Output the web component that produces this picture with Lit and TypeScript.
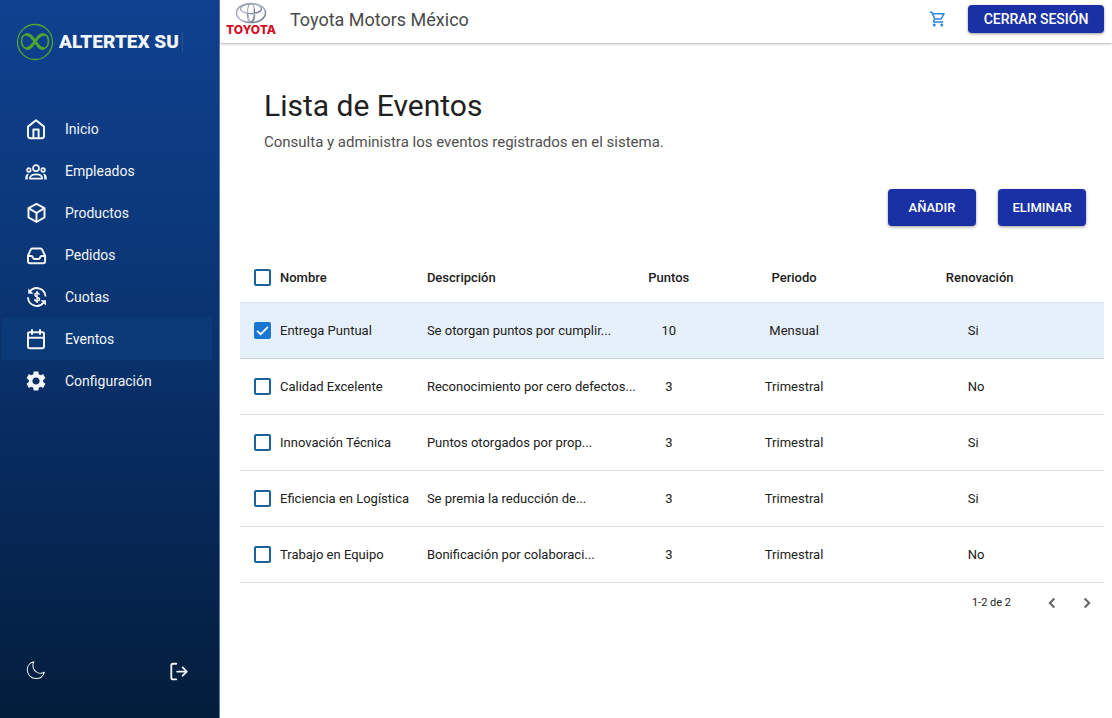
import { LitElement, html, css, svg } from "lit";
import { customElement, property, state } from "lit/decorators.js";
import { classMap } from "lit/directives/class-map.js";

const icons = {
  home: svg`<g fill="none" stroke="currentColor" stroke-width="2" stroke-linejoin="round" stroke-linecap="round"><path d="M4 9.6 12 3.2l8 6.4V19a2.2 2.2 0 0 1-2.2 2.2H6.2A2.2 2.2 0 0 1 4 19z"/><path d="M9.4 21v-8.600h5.200V21"/></g>`,
  people: svg`<g fill="none" stroke="currentColor" stroke-width="1.700" stroke-linejoin="round"><circle cx="12" cy="9.200" r="3"/><circle cx="4.900" cy="11" r="1.800"/><circle cx="19.100" cy="11" r="1.800"/><path d="M5.800 19.600c0-2.800 2.400-4.200 6.200-4.200s6.200 1.400 6.200 4.200z"/></g><path fill="currentColor" d="M4.800 14.600c-2.600.2-3.600 2-3.600 5.800h2.600c-.1-2.500.2-4.200 1-5.800zM19.200 14.600c2.600.2 3.600 2 3.600 5.800h-2.600c.1-2.500-.2-4.200-1-5.800z"/>`,
  box: svg`<g fill="none" stroke="currentColor" stroke-width="2" stroke-linejoin="round"><path d="m12.500 2.800 8 4.400v9.200l-8 4.600-8-4.600V7.200z"/><path d="m4.500 7.200 8 4.600 8-4.600M12.500 11.800V21"/></g>`,
  inbox: svg`<g fill="none" stroke="currentColor" stroke-width="2" stroke-linejoin="round" stroke-linecap="round"><path d="M4 12.700 6.600 6.800A2 2 0 0 1 8.400 5.500h8a2 2 0 0 1 1.800 1.300l2.900 5.900v5.600a2 2 0 0 1-2 2H6a2 2 0 0 1-2-2z"/><path d="M4 13.100h3.800c.8 0 1.200 2.800 2.500 2.800h4.400c1.300 0 1.700-2.800 2.500-2.800H21"/></g>`,
  money: svg`<g fill="none" stroke="currentColor" stroke-width="1.900"><path d="M6 6.200A8.800 8.800 0 0 1 21.500 11.500M19.600 17.600A8.800 8.800 0 0 1 4 12.200"/><path d="M15.300 9.700c-.2-1-1-1.600-2.200-1.600s-2.200.7-2.200 1.800c0 2.600 4.600 1.500 4.600 4.200 0 1.200-1.100 1.900-2.400 1.900s-2.300-.7-2.400-1.900M13.100 6v12" stroke-width="1.500"/></g><path fill="currentColor" d="M4.200 3.400v5.400h5.400zM21.900 20.600v-5.400h-5.400z"/>`,
  calendar: svg`<g fill="none" stroke="currentColor" stroke-width="2" stroke-linejoin="round" stroke-linecap="round"><rect x="4" y="5.200" width="16" height="16" rx="1.600"/><path d="M4 10.800h16M8 3v4M16 3v4"/></g>`,
  gear: svg`<path fill="currentColor" d="M19.140 12.940c.04-.3.060-.61.060-.94 0-.32-.02-.64-.07-.94l2.030-1.580c.18-.14.230-.41.120-.61l-1.920-3.320c-.12-.22-.37-.29-.59-.22l-2.390.96c-.5-.38-1.030-.7-1.620-.94l-.36-2.540c-.04-.24-.24-.41-.48-.41h-3.840c-.24 0-.43.170-.47.410l-.36 2.540c-.59.240-1.130.570-1.620.940l-2.390-.96c-.22-.08-.47 0-.59.220L2.740 8.870c-.12.210-.08.470.120.610l2.030 1.580c-.05.3-.09.630-.09.940s.02.640.070.940l-2.030 1.580c-.18.140-.23.410-.12.610l1.920 3.320c.12.220.370.290.590.220l2.390-.96c.5.380 1.030.7 1.620.940l.36 2.540c.05.240.240.410.480.410h3.840c.24 0 .44-.17.470-.41l.36-2.540c.59-.24 1.130-.56 1.620-.94l2.390.960c.22.080.470 0 .59-.22l1.920-3.320c.12-.22.070-.47-.12-.61l-2.010-1.580zM12 15.600c-1.980 0-3.600-1.620-3.600-3.600s1.620-3.600 3.600-3.600 3.600 1.620 3.600 3.600-1.620 3.600-3.600 3.600z"/>`,
  moon: svg`<path fill="none" stroke="currentColor" stroke-width="1.100" stroke-linejoin="round" d="M9.700 .8C5.500 1.600 2.500 5.200 2.500 9.600c0 5.500 4.300 9.600 9.600 9.600 4.200 0 7.700-2.700 9-6.900-2.200 1.300-5.300 1.500-8 .1-4-2.200-5.800-7.200-3.400-11.600z"/>`,
  logout: svg`<g fill="none" stroke="currentColor" stroke-width="2" stroke-linecap="round" stroke-linejoin="round"><path d="M9 3H5.400a1.800 1.800 0 0 0-1.800 1.800v13.400A1.800 1.800 0 0 0 5.400 20H9"/><path d="M10 11.500h10.500M16 7l4.500 4.500L16 16"/></g>`,
  cart: svg`<path fill="currentColor" d="M15.550 13c.75 0 1.410-.41 1.750-1.030l3.580-6.490A.996.996 0 0 0 20.010 4H5.210l-.94-2H1v2h2l3.600 7.590-1.350 2.440C4.520 15.370 5.480 17 7 17h12v-2H7l1.100-2h7.450zM6.160 6h12.150l-2.760 5H8.530L6.160 6zM7 18c-1.100 0-1.990.9-1.990 2S5.900 22 7 22s2-.9 2-2-.9-2-2-2zm10 0c-1.100 0-1.990.9-1.990 2s.89 2 1.990 2 2-.9 2-2-.9-2-2-2z"/>`,
  prev: svg`<path fill="currentColor" stroke="currentColor" stroke-width=".6" d="M15.410 7.410 14 6l-6 6 6 6 1.410-1.410L10.830 12z"/>`,
  next: svg`<path fill="currentColor" stroke="currentColor" stroke-width=".6" d="M10 6 8.590 7.410 13.170 12l-4.580 4.590L10 18l6-6z"/>`,
};

type IconName = keyof typeof icons;

@customElement("ui-icon")
export class UiIcon extends LitElement {
  @property() name: IconName = "home";

  static styles = css`
    :host { display: block; width: 24px; height: 24px; flex: none; }
    svg { display: block; width: 100%; height: 100%; }
  `;

  render() {
    return html`<svg viewBox="0 0 24 24" aria-hidden="true">${icons[this.name]}</svg>`;
  }
}

@customElement("app-sidebar")
export class AppSidebar extends LitElement {
  private items: { icon: IconName; label: string }[] = [
    { icon: "home", label: "Inicio" },
    { icon: "people", label: "Empleados" },
    { icon: "box", label: "Productos" },
    { icon: "inbox", label: "Pedidos" },
    { icon: "money", label: "Cuotas" },
    { icon: "calendar", label: "Eventos" },
    { icon: "gear", label: "Configuración" },
  ];

  static styles = css`
    :host {
      display: flex;
      flex-direction: column;
      width: 220px;
      flex: none;
      box-sizing: border-box;
      border-right: 1px solid #5d7ba8;
      background: linear-gradient(180deg, #0f4190 0%, #0b3777 36%, #07295a 68%, #031e3c 100%);
      color: #f3f5f8;
    }
    .brand { display: flex; align-items: center; gap: 5px; padding: 23px 0 0 16px; }
    .emblem { width: 38px; height: 38px; flex: none; }
    .word {
      font: 900 19px/20px Roboto, "Liberation Sans", sans-serif;
      white-space: nowrap;
      padding-right: 3px;
      border-right: 1px solid #2c5698;
    }
    .nav { display: flex; flex-direction: column; padding: 47px 7px 0 2px; }
    .link {
      display: flex;
      align-items: center;
      gap: 17px;
      height: 42px;
      padding-left: 22px;
      color: inherit;
      text-decoration: none;
      font-size: 14px;
      line-height: 20px;
    }
    .active { background: #0b3a78; }
    .foot { display: flex; justify-content: space-between; margin-top: auto; padding: 0 29px 35px 25px; }
    .tool { padding: 0; border: 0; background: none; color: inherit; cursor: pointer; }
    .tool ui-icon { width: 22px; height: 22px; }
  `;

  render() {
    return html`
      <div class="brand">
        <svg class="emblem" viewBox="0 0 38 38" fill="none" stroke="#4fa62c" aria-hidden="true">
          <circle cx="19" cy="19" r="17.500" stroke-width="1.300" />
          <path d="M10.500 11.500C7 11.500 5.500 14.500 5.500 18.500 6 23.500 8 25.500 11 25.500M27.500 11.500C31 11.500 32.500 14.500 32.500 18.500 32 23.500 30 25.500 27 25.500" stroke-width="1.700" />
          <path d="M9.500 11.800C14 10.500 16.500 15 19 18.500 21.500 22 24 26.500 28 25.200M28.500 11.800C24 10.500 21.500 15 19 18.500 16.500 22 14 26.500 10 25.200" stroke-width="2.900" />
        </svg>
        <span class="word">ALTERTEX SU</span>
      </div>
      <nav class="nav">
        ${this.items.map(
          (i) => html`<a href="#" class=${classMap({ link: true, active: i.label === "Eventos" })}>
            <ui-icon name=${i.icon}></ui-icon>${i.label}
          </a>`
        )}
      </nav>
      <div class="foot">
        <button class="tool" aria-label="Modo oscuro"><ui-icon name="moon"></ui-icon></button>
        <button class="tool" aria-label="Salir"><ui-icon name="logout"></ui-icon></button>
      </div>
    `;
  }
}

interface Evento {
  nombre: string;
  descripcion: string;
  puntos: number;
  periodo: string;
  renovacion: string;
}

@customElement("app-root")
export class AppRoot extends LitElement {
  @state() private selected = new Set<number>([0]);

  private eventos: Evento[] = [
    { nombre: "Entrega Puntual", descripcion: "Se otorgan puntos por cumplir...", puntos: 10, periodo: "Mensual", renovacion: "Si" },
    { nombre: "Calidad Excelente", descripcion: "Reconocimiento por cero defectos...", puntos: 3, periodo: "Trimestral", renovacion: "No" },
    { nombre: "Innovación Técnica", descripcion: "Puntos otorgados por prop...", puntos: 3, periodo: "Trimestral", renovacion: "Si" },
    { nombre: "Eficiencia en Logística", descripcion: "Se premia la reducción de...", puntos: 3, periodo: "Trimestral", renovacion: "Si" },
    { nombre: "Trabajo en Equipo", descripcion: "Bonificación por colaboraci...", puntos: 3, periodo: "Trimestral", renovacion: "No" },
  ];

  static styles = css`
    :host {
      display: flex;
      min-height: 100vh;
      background: #fff;
      color: #212121;
      font-family: Roboto, "Liberation Sans", sans-serif;
    }
    .page { flex: 1; min-width: 0; }
    .top {
      display: flex;
      align-items: center;
      height: 43px;
      box-sizing: border-box;
      padding: 0 8px 5px 7px;
      box-shadow: 0 1px 2px rgba(0, 0, 0, 0.28);
    }
    .maker { display: flex; flex-direction: column; align-items: center; width: 48px; }
    .maker svg { width: 32px; height: 22px; }
    .maker-name { font: 800 12px/12px Inter, sans-serif; color: #cf1126; }
    .company { flex: 1; margin-left: 15px; padding-top: 2px; font-size: 18px; line-height: 24px; color: #4a4a4a; }
    .cart { padding: 0; border: 0; background: none; color: #2a86dc; cursor: pointer; margin-right: 21px; }
    .cart ui-icon { width: 18px; height: 18px; }
    .btn {
      border: 0;
      border-radius: 4px;
      background: #1a31a6;
      color: #fff;
      font: 500 13px/20px Roboto, sans-serif;
      text-align: center;
      box-shadow: 0 1px 3px rgba(0, 0, 0, 0.4);
      cursor: pointer;
    }
    .session { width: 136px; height: 28px; padding: 0; font-size: 14px; }
    .action { width: 88px; height: 37px; padding: 0; }
    .content { padding: 45px 8px 0 20px; }
    .title { margin: 0 0 8px 24px; font-weight: 400; font-size: 30px; line-height: 36px; }
    .lead { margin: 0 0 0 24px; font-size: 15px; line-height: 20px; color: #4f4f4f; }
    .actions { display: flex; justify-content: flex-end; gap: 22px; margin: 37px 18px 28px 0; }
    .table { width: 100%; border-collapse: collapse; table-layout: fixed; font-size: 13px; white-space: nowrap; }
    .row { height: 56px; border-bottom: 1px solid #e0e0e0; }
    .head { height: 48px; }
    .picked { background: #e6f0fa; border-bottom-color: #c6d3de; }
    .row th, .row td { padding: 0; text-align: left; font-weight: 400; }
    .head th { font-weight: 500; }
    .c-check { width: 40px; }
    .c-name { width: 17%; }
    .c-desc { width: 24%; }
    .c-points { width: 8%; }
    .c-period { width: 21%; }
    .row .mid { text-align: center; }
    .row .renew { padding-left: 83px; }
    .head .renew { padding-left: 61px; }
    .check {
      display: block;
      appearance: none;
      box-sizing: border-box;
      width: 17px;
      height: 17px;
      margin: 0 0 0 14px;
      border: 2px solid #1a62a0;
      border-radius: 2px;
    }
    .check:checked {
      border-color: #1976d2;
      background: #1976d2 url("data:image/svg+xml,%3Csvg xmlns='http://www.w3.org/2000/svg' viewBox='0 0 13 13'%3E%3Cpath d='M1 6.800 4.700 10.200 12 2.800' fill='none' stroke='white' stroke-width='1.700'/%3E%3C/svg%3E") center / 13px 13px no-repeat;
    }
    .pager { display: flex; align-items: center; justify-content: flex-end; height: 40px; padding-right: 7px; font-size: 11px; }
    .turn { padding: 0; border: 0; background: none; color: #616161; cursor: pointer; }
    .turn ui-icon { width: 20px; height: 20px; }
    .range { margin-right: 31px; }
    .turn + .turn { margin-left: 15px; }
  `;

  private toggle(i: number) {
    const next = new Set(this.selected);
    next.has(i) ? next.delete(i) : next.add(i);
    this.selected = next;
  }

  private toggleAll(e: Event) {
    const on = (e.target as HTMLInputElement).checked;
    this.selected = new Set(on ? this.eventos.map((_, i) => i) : []);
  }

  render() {
    return html`
      <app-sidebar></app-sidebar>
      <div class="page">
        <header class="top">
          <div class="maker">
            <svg viewBox="0 0 32 22" fill="none" aria-hidden="true">
              <defs>
                <linearGradient id="chrome" x1="0" y1="0" x2="1" y2="1">
                  <stop offset="0" stop-color="#8e97a8" />
                  <stop offset="0.500" stop-color="#b4bccc" />
                  <stop offset="1" stop-color="#4d5878" />
                </linearGradient>
              </defs>
              <g stroke="url(#chrome)">
                <ellipse cx="16" cy="11" rx="14.500" ry="9.600" stroke-width="1.500" />
                <ellipse cx="16" cy="6.800" rx="10.500" ry="4.800" stroke-width="1.300" />
                <path d="M12.500 11C12.500 4 14 2 16 2s3.500 2 3.500 9" stroke-width="1.200" />
                <path d="M12.600 11c.1 6 1.400 9 3.400 9s3.300-3 3.400-9" stroke-width="2" />
              </g>
            </svg>
            <span class="maker-name">TOYOTA</span>
          </div>
          <span class="company">Toyota Motors México</span>
          <button class="cart" aria-label="Carrito"><ui-icon name="cart"></ui-icon></button>
          <button class="btn session">CERRAR SESIÓN</button>
        </header>
        <main class="content">
          <h1 class="title">Lista de Eventos</h1>
          <p class="lead">Consulta y administra los eventos registrados en el sistema.</p>
          <div class="actions">
            <button class="btn action">AÑADIR</button>
            <button class="btn action">ELIMINAR</button>
          </div>
          <table class="table">
            <thead>
              <tr class="row head">
                <th class="c-check">
                  <input class="check" type="checkbox" aria-label="Seleccionar todos"
                    .checked=${this.selected.size === this.eventos.length} @change=${this.toggleAll} />
                </th>
                <th class="c-name">Nombre</th>
                <th class="c-desc">Descripción</th>
                <th class="c-points mid">Puntos</th>
                <th class="c-period mid">Periodo</th>
                <th class="renew">Renovación</th>
              </tr>
            </thead>
            <tbody>
              ${this.eventos.map(
                (e, i) => html`<tr class=${classMap({ row: true, picked: this.selected.has(i) })}>
                  <td>
                    <input class="check" type="checkbox" aria-label=${e.nombre}
                      .checked=${this.selected.has(i)} @change=${() => this.toggle(i)} />
                  </td>
                  <td>${e.nombre}</td>
                  <td>${e.descripcion}</td>
                  <td class="mid">${e.puntos}</td>
                  <td class="mid">${e.periodo}</td>
                  <td class="renew">${e.renovacion}</td>
                </tr>`
              )}
            </tbody>
          </table>
          <div class="pager">
            <span class="range">1-2 de 2</span>
            <button class="turn" aria-label="Página anterior"><ui-icon name="prev"></ui-icon></button>
            <button class="turn" aria-label="Página siguiente"><ui-icon name="next"></ui-icon></button>
          </div>
        </main>
      </div>
    `;
  }
}
